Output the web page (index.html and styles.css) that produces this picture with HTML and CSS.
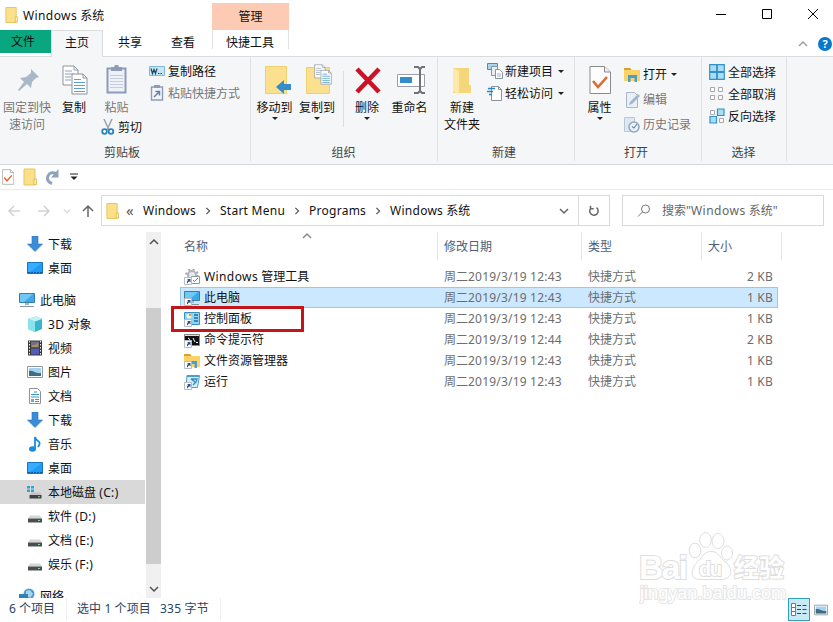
FILE: index.html
```html
<!DOCTYPE html>
<html lang="zh-CN">
<head>
    <meta charset="UTF-8">
    <meta name="viewport" content="width=device-width, initial-scale=1.0">
    <title>Windows 系统</title>
    <link rel="stylesheet" href="styles.css">
</head>
<body>
    <!-- 图标 -->
    <svg class="sprite">
        <symbol id="i-folder" viewBox="0 0 16 18">
            <path d="M2 1h11v16H2z" fill="#fbe08a" stroke="#e5c45c"/>
            <path d="M12 11h2.500v5.500H12z" fill="#ffeeb0" stroke="#d9b64d" stroke-width=".8"/>
        </symbol>
        <symbol id="i-check" viewBox="0 0 22 28">
            <path d="M1 .5h14.500l6 5.500v21.500H1z" fill="#fdfdfd" stroke="#8b8b8b"/>
            <path d="M15.500 .5V6h6" fill="#eee" stroke="#8b8b8b"/>
            <path d="M4 15l5 6 9-10" fill="none" stroke="#dd6b33" stroke-width="2.600"/>
        </symbol>
        <symbol id="i-pages" viewBox="0 0 26 30">
            <path d="M1 1h11l4 4v15H1z" fill="#fff" stroke="#8d939c"/>
            <path d="M12 1v4h4M3 6h7M3 9h9M3 12h6M3 15h6" fill="none" stroke="#8ca0bb"/>
            <path d="M10 9h11l4 4v16H10z" fill="#fff" stroke="#8d939c"/>
            <path d="M21 9v4h4" fill="none" stroke="#8d939c"/>
            <path d="M12 14.500h7M12 17.500h11M12 20.500h11M12 23.500h11M12 26.500h11" stroke="#5b9fd4" stroke-width="1.200"/>
        </symbol>
        <symbol id="i-download" viewBox="0 0 16 16">
            <path d="M5 0h6v8h4.500L8 15.500.5 8H5z" fill="#3a8bd8" stroke="#2c75bd" stroke-width=".6"/>
        </symbol>
        <symbol id="i-desktop" viewBox="0 0 16 16">
            <path d="M.5 2.500h15v11H.5z" fill="#1e9cf5" stroke="#1775bd"/>
            <path d="M1 3h14L3 12H1z" fill="#38acff"/>
            <path d="M1 12.500h14" stroke="#0c5d9e" stroke-dasharray="2 1"/>
        </symbol>
        <symbol id="i-pc" viewBox="0 0 16 16">
            <path d="M.5 1.500h15v9H.5z" fill="#3aaae8" stroke="#3c7da8"/>
            <path d="M1 2h13L5 10H1z" fill="#6fc8f5"/>
            <path d="M6 11h4v2H6z" fill="#aab7c2"/>
            <path d="M1 14.500h14" stroke="#7e93a5"/>
        </symbol>
        <symbol id="i-drive" viewBox="0 0 16 16">
            <path d="M3 7.500h10l2 3H1z" fill="#d6d6d6"/>
            <path d="M1 10.500h14v4H1z" fill="#4a4e52"/>
            <path d="M11 12.500h2" stroke="#79e07f" stroke-width="1.200"/>
        </symbol>
        <symbol id="i-picture" viewBox="0 0 16 16">
            <path d="M.5 2.500h15v11H.5z" fill="#fff" stroke="#8f989f"/>
            <path d="M2 4h12v8H2z" fill="#a7d3ee"/>
            <path d="M2 7c4-1 7 3 12 2v3H2z" fill="#3e6c83"/>
        </symbol>
        <symbol id="i-shortcut" viewBox="0 0 16 16">
            <path d="M.5 8.500h7v7h-7z" fill="#fff" stroke="#b8bcc0"/>
            <path d="M3 10h3.500v3.500L5.300 12.300Q3.800 13 3.600 14.500q-1.800-1.500.6-3.400z" fill="#28518d"/>
        </symbol>
        <symbol id="i-gear" viewBox="0 0 16 16">
            <circle cx="8" cy="6" r="4" fill="#e8eaec" stroke="#b0b5b9" stroke-width="2"/>
            <circle cx="8" cy="6" r="5.800" fill="none" stroke="#a4a9ae" stroke-width="2" stroke-dasharray="2 2.550"/>
            <path d="M7.500 7.500h8v7h-8z" fill="#fff" stroke="#8d99a4"/>
            <path d="M9 11l1.500 1.500L14 9" fill="none" stroke="#3c83b8"/>
        </symbol>
        <symbol id="i-panel" viewBox="0 0 16 16">
            <path d="M.5 1.500h15v12H.5z" fill="#8fd3f3" stroke="#3b8fc4"/>
            <circle cx="5" cy="5" r="2.500" fill="#f4f8dc"/>
            <path d="M5 5V2.500A2.500 2.500 0 0 1 7.500 5z" fill="#e39840"/>
            <path d="M10 4h4M10 7h4M10 10h4" stroke="#246d9f" stroke-width="1.500"/>
        </symbol>
        <symbol id="i-cmd" viewBox="0 0 16 16">
            <path d="M.5 2.500h15v11H.5z" fill="#111" stroke="#888"/>
            <path d="M1 3.500h14" stroke="#ddd"/>
            <path d="M4 6l2 1.500L4 9M9 6l2 4M12 10.500h2" fill="none" stroke="#fff"/>
        </symbol>
        <symbol id="i-explorer" viewBox="0 0 16 16">
            <path d="M0 1h6l1.500 2H16v11H0z" fill="#f9d367"/>
            <path d="M0 1h6l1.500 2H0z" fill="#dba02c"/>
            <path d="M4 15V8h9v7h-2.500v-4h-4v4z" fill="#4a9fce"/>
        </symbol>
        <symbol id="i-run" viewBox="0 0 16 16">
            <path d="M3 1.500h12.500l-2 12H2z" fill="#d6eef9" stroke="#4e9cc7"/>
            <path d="M3 2.500h12" stroke="#4e9cc7"/>
            <path d="M7 5h6l-1 3-3 3M7 5l4 3" fill="none" stroke="#2f86bd" stroke-width="1.300"/>
        </symbol>
        <symbol id="i-chevron" viewBox="0 0 10 10">
            <path d="M1 3l4 4 4-4" fill="none" stroke="currentColor" stroke-width="1.500"/>
        </symbol>
        <symbol id="i-arrow" viewBox="0 0 14 14">
            <path d="M13 7H2M7 2L2 7l5 5" fill="none" stroke="currentColor" stroke-width="1.500"/>
        </symbol>
    </svg>

    <!-- 标题栏 -->
    <header class="titlebar">
        <div class="title">
            <svg class="title-icon"><use href="#i-folder"/></svg>
            <span><span class="en">Windows</span> 系统</span>
        </div>
        <div class="context-tab">管理</div>
        <div class="window-buttons">
            <svg viewBox="0 0 46 28"><path d="M18 14.500h10"/></svg>
            <svg viewBox="0 0 46 28"><path d="M18.500 9.500h9v9h-9z"/></svg>
            <svg viewBox="0 0 46 28"><path d="M18 9l10 10M28 9L18 19"/></svg>
        </div>
    </header>

    <!-- 选项卡 -->
    <nav class="tabs">
        <a class="tab tab-file">文件</a>
        <a class="tab tab-active">主页</a>
        <a class="tab tab-share">共享</a>
        <a class="tab tab-view">查看</a>
        <a class="tab tab-tools">快捷工具</a>
        <div class="tabs-right">
            <svg class="collapse"><use href="#i-chevron"/></svg>
            <span class="help">?</span>
        </div>
    </nav>

    <!-- 功能区 -->
    <section class="ribbon">
        <div class="group group-clipboard">
            <div class="group-body">
                <div class="big disabled w-pin">
                    <svg class="big-icon" viewBox="0 0 32 32">
                        <path d="M20 5l8 8-3 1-4 4-1 6-4-4-8 7-1-1 6-8-4-4 6-1 5-4z" fill="#a9b8c9"/>
                    </svg>
                    <span>固定到快<br>速访问</span>
                </div>
                <div class="big w-copy">
                    <svg class="big-icon" viewBox="0 0 32 32"><use href="#i-pages" x="4" y="1" width="26" height="30"/></svg>
                    <span>复制</span>
                </div>
                <div class="paste-column">
                    <div class="big disabled">
                        <svg class="big-icon" viewBox="0 0 32 32">
                            <path d="M6.500 4.500h18v24h-18z" fill="#eef2f8" stroke="#8b9cb8" stroke-width="2"/>
                            <path d="M10 3h3l1-2h3l1 2h3v4H10z" fill="#8e9db5"/>
                            <path d="M9 11.500h13M9 14.500h13M9 17.500h13M9 20.500h13M9 23.500h13" stroke="#c3cddc"/>
                        </svg>
                        <span>粘贴</span>
                    </div>
                    <div class="small cut">
                        <svg class="small-icon" viewBox="0 0 16 16">
                            <path d="M3 0l5 11M11 0L6 11" stroke="#9aa4ae" stroke-width="1.500"/>
                            <circle cx="3.500" cy="12.500" r="2.300" fill="#fff" stroke="#2685bd" stroke-width="1.800"/>
                            <circle cx="10" cy="12.500" r="2.300" fill="#fff" stroke="#2685bd" stroke-width="1.800"/>
                        </svg>
                        <span>剪切</span>
                    </div>
                </div>
                <div class="small-list">
                    <div class="small">
                        <svg class="small-icon" viewBox="0 0 16 16">
                            <path d="M.5 3.500h15v9H.5z" fill="#c5e5f7" stroke="#82b9d8"/>
                            <path d="M2 5.500l1.500 5L5 6.500l1.500 4 1.500-5M9 10.500h1.500M11.500 10.500H13" fill="none" stroke="#1d4763" stroke-width="1.200"/>
                        </svg>
                        <span>复制路径</span>
                    </div>
                    <div class="small disabled">
                        <svg class="small-icon" viewBox="0 0 16 16">
                            <path d="M2.500 2h11v13h-11z" fill="#f2f5f9" stroke="#8d9db7" stroke-width="1.400"/>
                            <path d="M5 0h6v3H5z" fill="#8d9db7"/>
                            <path d="M5 12l5-5M6.500 6.500h4v4" fill="none" stroke="#6681a8" stroke-width="1.500"/>
                        </svg>
                        <span>粘贴快捷方式</span>
                    </div>
                </div>
            </div>
            <div class="group-label">剪贴板</div>
        </div>

        <div class="group group-organize">
            <div class="group-body">
                <div class="big w-move">
                    <svg class="big-icon" viewBox="0 0 32 32">
                        <path d="M6.500 2.500h21v27h-21z" fill="#fbe08f" stroke="#edcf70"/>
                        <path d="M17 23l8-7v4h7v6h-7v4z" fill="#338ccb"/>
                    </svg>
                    <span>移动到</span>
                    <i class="caret"></i>
                </div>
                <div class="big w-copyto">
                    <svg class="big-icon" viewBox="0 0 32 32">
                        <path d="M5.500 3.500h23v26h-23z" fill="#fbe08f" stroke="#edcf70"/>
                        <use href="#i-pages" x="13" y="0" width="18" height="21"/>
                    </svg>
                    <span>复制到</span>
                    <i class="caret"></i>
                </div>
                <div class="divider"></div>
                <div class="big w-delete">
                    <svg class="big-icon" viewBox="0 0 32 32">
                        <path d="M6 5l22 23M28 5L6 28" stroke="#cd1126" stroke-width="4.600"/>
                    </svg>
                    <span>删除</span>
                    <i class="caret"></i>
                </div>
                <div class="big w-rename">
                    <svg class="big-icon" viewBox="0 0 32 32">
                        <path d="M3.500 10.500h27v12h-27z" fill="#fff" stroke="#9aa1a8"/>
                        <path d="M6 13h12v6H6z" fill="#348ccd"/>
                        <path d="M20 3h4l2 2 2-2h3M26 5v22M20 29h4l2-2 2 2h3" fill="none" stroke="#6e7276" stroke-width="2"/>
                    </svg>
                    <span>重命名</span>
                </div>
            </div>
            <div class="group-label">组织</div>
        </div>

        <div class="group group-new">
            <div class="group-body">
                <div class="big w-new">
                    <svg class="big-icon" viewBox="0 0 32 32">
                        <path d="M7 4h16v16l2 2v7H7z" fill="#f6d67b"/>
                        <path d="M7 4l6 3v24l-6-4z" fill="#ffe9a8"/>
                    </svg>
                    <span>新建<br>文件夹</span>
                </div>
                <div class="small-list">
                    <div class="small">
                        <svg class="small-icon" viewBox="0 0 16 16">
                            <path d="M.5 .5h10v6H.5z" fill="#a9d6ef" stroke="#5489a8"/>
                            <path d="M4.500 3.500h6v9h-6z" fill="#e8eef2" stroke="#88939c"/>
                            <path d="M8.500 6.500h4l3 3v6h-7z" fill="#fff" stroke="#88939c"/>
                            <path d="M10 11h4M10 13h4" stroke="#9cb0c0"/>
                        </svg>
                        <span>新建项目</span>
                        <i class="caret"></i>
                    </div>
                    <div class="small">
                        <svg class="small-icon" viewBox="0 0 16 16">
                            <path d="M4.500 1.500h7l3 3v11h-10z" fill="#fff" stroke="#88939c"/>
                            <path d="M11.500 1.500v3h3" fill="none" stroke="#88939c"/>
                            <path d="M1 3.500h7M0 6.500h6M2 9.500h3" stroke="#2e84bd" stroke-width="1.300"/>
                        </svg>
                        <span>轻松访问</span>
                        <i class="caret"></i>
                    </div>
                </div>
            </div>
            <div class="group-label">新建</div>
        </div>

        <div class="group group-open">
            <div class="group-body">
                <div class="big w-props">
                    <svg class="big-icon" viewBox="0 0 32 32"><use href="#i-check" x="5" y="2" width="22" height="28"/></svg>
                    <span>属性</span>
                    <i class="caret"></i>
                </div>
                <div class="small-list">
                    <div class="small">
                        <svg class="small-icon"><use href="#i-explorer"/></svg>
                        <span>打开</span>
                        <i class="caret"></i>
                    </div>
                    <div class="small disabled">
                        <svg class="small-icon" viewBox="0 0 16 16">
                            <path d="M2.500 .5h8l3 3v12h-11z" fill="#e9eff6" stroke="#a9b7c7"/>
                            <path d="M5 13l1-3 8-8 2 2-8 8z" fill="#a3b6cb"/>
                        </svg>
                        <span>编辑</span>
                    </div>
                    <div class="small disabled">
                        <svg class="small-icon" viewBox="0 0 16 16">
                            <path d="M.5 .5h10v14H.5z" fill="#dfe7f1" stroke="#b9c6d6"/>
                            <circle cx="10" cy="10" r="5" fill="#edf2f8" stroke="#94a8c2" stroke-width="1.600"/>
                            <path d="M13 7l-3 4-2-1.500" fill="none" stroke="#6f87a8" stroke-width="1.200"/>
                        </svg>
                        <span>历史记录</span>
                    </div>
                </div>
            </div>
            <div class="group-label">打开</div>
        </div>

        <div class="group group-select">
            <div class="group-body">
                <div class="small-list">
                    <div class="small">
                        <svg class="small-icon" viewBox="0 0 16 16">
                            <path d="M.7 .7h7v7h-7zM8.300 .7h7v7h-7zM.7 8.300h7v7h-7zM8.300 8.300h7v7h-7z" fill="#a9dcf5" stroke="#3490c8" stroke-width="1.200"/>
                        </svg>
                        <span>全部选择</span>
                    </div>
                    <div class="small">
                        <svg class="small-icon" viewBox="0 0 16 16">
                            <path d="M1.500 1.500h4v4h-4zM9.500 1.500h4v4h-4zM1.500 9.500h4v4h-4zM9.500 9.500h4v4h-4z" fill="#fff" stroke="#a8a8a8"/>
                        </svg>
                        <span>全部取消</span>
                    </div>
                    <div class="small">
                        <svg class="small-icon" viewBox="0 0 16 16">
                            <path d="M1.500 2.500h4v4h-4zM10.500 10.500h4v4h-4z" fill="#fff" stroke="#a8a8a8"/>
                            <path d="M8.500 1h6.500v6.500H8.500zM1 8.500h6.500V15H1z" fill="#a9dcf5" stroke="#3490c8" stroke-width="1.200"/>
                        </svg>
                        <span>反向选择</span>
                    </div>
                </div>
            </div>
            <div class="group-label">选择</div>
        </div>
    </section>

    <!-- 快速访问工具栏 -->
    <div class="quickbar">
        <svg class="quick-check"><use href="#i-check"/></svg>
        <svg class="quick-folder"><use href="#i-folder"/></svg>
        <svg class="quick-redo" viewBox="0 0 16 16">
            <path d="M7 14.500Q1 12 3 7t8-2.500" fill="none" stroke="#8fa3bb" stroke-width="3"/>
            <path d="M13.500 0v8.500H6z" fill="#8fa3bb"/>
        </svg>
        <svg class="quick-more" viewBox="0 0 8 8"><path d="M0 1h8" stroke="#222"/><path d="M.5 3.500h7L4 7z" fill="#222"/></svg>
    </div>

    <!-- 地址栏 -->
    <div class="address-row">
        <div class="history">
            <svg class="back"><use href="#i-arrow"/></svg>
            <svg class="forward"><use href="#i-arrow"/></svg>
            <svg class="recent"><use href="#i-chevron"/></svg>
            <svg class="up"><use href="#i-arrow"/></svg>
        </div>
        <div class="address">
            <svg class="address-icon"><use href="#i-folder"/></svg>
            <span class="more">«</span>
            <span class="crumb en">Windows</span>
            <svg class="crumb-arrow"><use href="#i-chevron"/></svg>
            <span class="crumb en">Start Menu</span>
            <svg class="crumb-arrow"><use href="#i-chevron"/></svg>
            <span class="crumb en">Programs</span>
            <svg class="crumb-arrow"><use href="#i-chevron"/></svg>
            <span class="crumb"><span class="en">Windows</span> 系统</span>
            <svg class="address-drop"><use href="#i-chevron"/></svg>
            <div class="refresh">
                <svg viewBox="0 0 12 12">
                    <path d="M3 3a4.200 4.200 0 1 0 5.500-.3M2.500 .8v3h3.200" fill="none" stroke="#666" stroke-width="1.500"/>
                </svg>
            </div>
        </div>
        <div class="search">
            <svg viewBox="0 0 14 14"><circle cx="8.500" cy="5" r="4" fill="none" stroke="#777"/><path d="M5.500 8L1 12.500" stroke="#777"/></svg>
            <span>搜索"<span class="en">Windows</span> 系统"</span>
        </div>
    </div>

    <main class="content">
        <!-- 导航窗格 -->
        <aside class="tree">
            <div class="node child"><svg><use href="#i-download"/></svg><span>下载</span></div>
            <div class="node child"><svg><use href="#i-desktop"/></svg><span>桌面</span></div>
            <div class="node root"><svg><use href="#i-pc"/></svg><span>此电脑</span></div>
            <div class="node child">
                <svg viewBox="0 0 16 16">
                    <path d="M1 3l8-2.500L15 3v10l-7 3-7-3z" fill="#39b6cc"/>
                    <path d="M1 3l7 2.500V16l-7-3z" fill="#8ae2ec"/>
                    <path d="M1 3l8-2.500L15 3 8 5.500z" fill="#c0f3f7"/>
                </svg>
                <span><span class="drive">3D</span> 对象</span>
            </div>
            <div class="node child">
                <svg viewBox="0 0 16 16">
                    <path d="M1 .5h14v15H1z" fill="#393939"/>
                    <path d="M4 1.500h8v6H4z" fill="#716c8d"/>
                    <path d="M4 8.500h8v6H4z" fill="#515db8"/>
                    <path d="M5 5h3l3-2v4H5z" fill="#a89548"/>
                    <path d="M2.500 1v14M13.500 1v14" stroke="#eee" stroke-dasharray="1.500 1.500"/>
                </svg>
                <span>视频</span>
            </div>
            <div class="node child"><svg><use href="#i-picture"/></svg><span>图片</span></div>
            <div class="node child">
                <svg viewBox="0 0 16 16">
                    <path d="M2.500 .5h8l3 3v12h-11z" fill="#fff" stroke="#8d9499"/>
                    <path d="M7 4h3M4 6.500h8M4 9h8M8 11.500h4M8 13.500h4" stroke="#3f92c3"/>
                    <path d="M4 11h3v3H4z" fill="#67abd0"/>
                </svg>
                <span>文档</span>
            </div>
            <div class="node child"><svg><use href="#i-download"/></svg><span>下载</span></div>
            <div class="node child">
                <svg viewBox="0 0 16 16">
                    <ellipse cx="5.500" cy="13" rx="3.500" ry="2.700" fill="#1c8bdc"/>
                    <path d="M8 13V1q1 3 3.500 4.500T11 11" fill="none" stroke="#1c8bdc" stroke-width="1.800"/>
                </svg>
                <span>音乐</span>
            </div>
            <div class="node child"><svg><use href="#i-desktop"/></svg><span>桌面</span></div>
            <div class="node child selected">
                <svg viewBox="0 0 16 16">
                    <path d="M0 2h3v2.500H0zM4 2h3v2.500H4zM0 5.500h3V8H0zM4 5.500h3V8H4z" fill="#24a9dd"/>
                    <path d="M4 8.500h9l1.500 2.500h-12z" fill="#c4c4c4"/>
                    <path d="M2.500 11h12v3.500h-12z" fill="#3f4347"/>
                    <path d="M11 12.700h2" stroke="#79e07f"/>
                </svg>
                <span>本地磁盘 <span class="drive">(C:)</span></span>
            </div>
            <div class="node child"><svg><use href="#i-drive"/></svg><span>软件 <span class="drive">(D:)</span></span></div>
            <div class="node child"><svg><use href="#i-drive"/></svg><span>文档 <span class="drive">(E:)</span></span></div>
            <div class="node child"><svg><use href="#i-drive"/></svg><span>娱乐 <span class="drive">(F:)</span></span></div>
            <div class="node root network">
                <svg viewBox="0 0 16 16">
                    <circle cx="10" cy="6" r="5.500" fill="#4e9bd0"/>
                    <path d="M7 3l4-1 3 4-3 4-4-3z" fill="#a6d5ee"/>
                    <path d="M0 6h9v6H0z" fill="#3182ba"/>
                </svg>
                <span>网络</span>
            </div>
        </aside>
        <div class="scrollbar">
            <svg class="scroll-up"><use href="#i-chevron"/></svg>
            <div class="thumb"></div>
            <svg class="scroll-down"><use href="#i-chevron"/></svg>
        </div>

        <!-- 文件列表 -->
        <section class="files">
            <svg class="sort"><use href="#i-chevron"/></svg>
            <div class="row head">
                <span>名称</span><span>修改日期</span><span>类型</span><span>大小</span>
            </div>
            <div class="row">
                <span class="name"><svg><use href="#i-gear"/><use href="#i-shortcut"/></svg><span><span class="en">Windows</span> 管理工具</span></span>
                <span>周二<span class="num">2019/3/19 12:43</span></span><span>快捷方式</span><span class="size">2 KB</span>
            </div>
            <div class="row active">
                <span class="name"><svg><use href="#i-pc"/><use href="#i-shortcut"/></svg>此电脑</span>
                <span>周二<span class="num">2019/3/19 12:43</span></span><span>快捷方式</span><span class="size">1 KB</span>
            </div>
            <div class="row">
                <span class="name"><svg><use href="#i-panel"/><use href="#i-shortcut"/></svg>控制面板</span>
                <span>周二<span class="num">2019/3/19 12:43</span></span><span>快捷方式</span><span class="size">1 KB</span>
            </div>
            <div class="row">
                <span class="name"><svg><use href="#i-cmd"/><use href="#i-shortcut"/></svg>命令提示符</span>
                <span>周二<span class="num">2019/3/19 12:44</span></span><span>快捷方式</span><span class="size">2 KB</span>
            </div>
            <div class="row">
                <span class="name"><svg><use href="#i-explorer"/><use href="#i-shortcut"/></svg>文件资源管理器</span>
                <span>周二<span class="num">2019/3/19 12:43</span></span><span>快捷方式</span><span class="size">1 KB</span>
            </div>
            <div class="row">
                <span class="name"><svg><use href="#i-run"/><use href="#i-shortcut"/></svg>运行</span>
                <span>周二<span class="num">2019/3/19 12:43</span></span><span>快捷方式</span><span class="size">1 KB</span>
            </div>
            <div class="marker"></div>
        </section>
    </main>

    <!-- 状态栏 -->
    <footer class="status">
        <span class="count">6 个项目</span>
        <span class="picked">选中 1 个项目</span>
        <span class="bytes">335 字节</span>
        <div class="views">
            <span class="view view-on">
                <svg viewBox="0 0 16 14"><path d="M.5 .5h4v4h-4zM.5 4.500h4v4h-4zM.5 8.500h4v4h-4z" fill="#fff" stroke="#777"/><path d="M6 2.500h4M11.500 2.500h4M6 6.500h4M11.500 6.500h4M6 10.500h4M11.500 10.500h4" stroke="#444"/></svg>
            </span>
            <span class="view"><svg><use href="#i-picture"/></svg></span>
        </div>
    </footer>

    <!-- 水印 -->
    <svg class="watermark" viewBox="0 0 150 74">
        <g class="paw">
            <ellipse cx="56" cy="20.500" rx="5.800" ry="7.300"/>
            <ellipse cx="66.500" cy="10" rx="5.800" ry="7.500"/>
            <ellipse cx="79" cy="11" rx="6" ry="7.500"/>
            <ellipse cx="88" cy="23" rx="5.500" ry="7"/>
            <path d="M72 21.500c-8 0-9 7-14 11s-9 17 3 17h21c12 0 12-12 5-17s-7-11-15-11z"/>
        </g>
        <text class="wm-big" x="0" y="49" textLength="49">Bai</text>
        <text class="wm-du" x="60" y="46" textLength="23">du</text>
        <text class="wm-cn" x="95" y="47" textLength="50">经验</text>
        <text class="wm-url" x="1" y="69" textLength="146">jingyan.baidu.com</text>
    </svg>
</body>
</html>
```
FILE: styles.css
```css
* {
    box-sizing: border-box;
}

body {
    position: relative;
    display: flex;
    flex-direction: column;
    width: 833px;
    height: 622px;
    margin: 0;
    overflow: hidden;
    background: #fff;
    color: #111;
    font-family: "Noto Sans", "Noto Sans CJK SC", sans-serif;
    font-size: 12px;
    line-height: 17px;
    white-space: nowrap;
}

svg {
    display: block;
    flex: none;
}

.sprite {
    position: absolute;
    width: 0;
    height: 0;
}

.en {
    letter-spacing: 0.25px;
}

.num {
    letter-spacing: 0.2px;
}

/* 标题栏 */
.titlebar {
    display: flex;
    flex: none;
    height: 30px;
}

.title {
    display: flex;
    align-items: center;
    width: 212px;
    padding-left: 4px;
    gap: 4px;
}

.title .en {
    letter-spacing: 0.4px;
}

.title-icon {
    width: 15px;
    height: 18px;
}

.context-tab {
    width: 77px;
    height: 27px;
    margin-top: 3px;
    background: #fdcbb3;
    line-height: 27px;
    text-align: center;
}

.window-buttons {
    display: flex;
    margin: 0 -3px 0 auto;
}

.window-buttons svg {
    width: 46px;
    height: 28px;
    fill: none;
    stroke: #000;
}

/* 选项卡 */
.tabs {
    position: relative;
    display: flex;
    flex: none;
    height: 27px;
    margin-bottom: -1px;
}

.tab {
    height: 26px;
    line-height: 25px;
    text-align: center;
}

.tab-file {
    width: 51px;
    height: 23px;
    padding-right: 5px;
    background: #09a77f;
    line-height: 23px;
}

.tab-active {
    width: 52px;
    height: 27px;
    border: 1px solid #dadbdc;
    border-bottom: 0;
    background: #f5f6f7;
    line-height: 24px;
}

.tab-share {
    width: 54px;
}

.tab-view {
    width: 52px;
    margin-right: 3px;
}

.tab-tools {
    width: 77px;
    height: 19px;
    padding-right: 1px;
    border: 1px solid #e6e2e0;
    border-width: 0 1px;
}

.tabs-right {
    display: flex;
    align-items: center;
    gap: 10px;
    margin-left: auto;
    padding-right: 1px;
}

.collapse {
    width: 10px;
    height: 10px;
    color: #a0a0a0;
    transform: rotate(180deg);
}

.help {
    width: 14px;
    height: 14px;
    border-radius: 50%;
    background: #0877cc;
    color: #fff;
    font-weight: bold;
    font-size: 11px;
    line-height: 14px;
    text-align: center;
}

/* 功能区 */
.ribbon {
    display: flex;
    flex: none;
    height: 109px;
    border-top: 1px solid #dadbdc;
    border-bottom: 1px solid #d5d6d7;
    background: #f5f6f7;
}

.group {
    display: flex;
    flex-direction: column;
    height: 104px;
    border-right: 1px solid #e0e1e2;
}

.group-clipboard { width: 251px; }
.group-organize { width: 187px; }
.group-new { width: 137px; }
.group-open { width: 127px; }
.group-select { width: 85px; }

.group-body {
    display: flex;
    height: 87px;
    padding-top: 7px;
}

.group-label {
    padding-right: 4px;
    color: #444;
    text-align: center;
}

.group-clipboard .group-label {
    padding-right: 6px;
}

.group-organize .group-label,
.group-select .group-label {
    padding-right: 1px;
}

.big {
    display: flex;
    flex-direction: column;
    align-items: center;
    text-align: center;
}

.big-icon {
    width: 32px;
    height: 32px;
    margin-bottom: 3px;
}

.w-pin { width: 54px; }
.w-copy { width: 40px; }
.w-move { width: 47px; }
.w-copyto { width: 38px; }
.w-delete { width: 46px; }
.w-rename { width: 39px; }
.w-new { width: 48px; }
.w-props { width: 49px; }

.caret {
    width: 0;
    height: 0;
    border: 3px solid transparent;
    border-top: 3px solid #222;
    border-bottom: 0;
}

.big .caret {
    margin-top: 1px;
}

.disabled {
    color: #777;
}

.paste-column {
    width: 55px;
}

.paste-column .big {
    width: 45px;
}

.small {
    display: flex;
    align-items: center;
    height: 22px;
    gap: 3px;
}

/* мелкие строки стоят чуть выше больших кнопок */
.small-list {
    margin-top: -3px;
}

.group-open .small-list {
    margin-top: -2px;
}

.small-icon {
    width: 16px;
    height: 16px;
}

.small .caret {
    margin-left: 3px;
}

.cut {
    margin-left: 7px;
    gap: 1px;
}

.group-clipboard .small-list,
.group-new .small-list {
    margin-top: -4px;
}

.group-new .small-list {
    padding-left: 1px;
}

.group-new .small {
    gap: 2px;
}

.group-open .small {
    height: 25px;
}

.group-open .small .caret {
    margin-left: 1px;
}

.group-select .small-list {
    padding-left: 7px;
}

.divider {
    width: 1px;
    height: 56px;
    margin: 7px 0 0 7px;
    background: #dddee0;
}

/* 快速访问工具栏 */
.quickbar {
    display: flex;
    flex: none;
    align-items: center;
    height: 25px;
    padding-left: 2px;
    border-bottom: 1px solid #ececec;
}

.quick-check {
    width: 12px;
    height: 16px;
    margin-right: 8px;
}

.quick-folder {
    width: 16px;
    height: 18px;
    margin-right: 7px;
}

.quick-redo {
    width: 16px;
    height: 16px;
    margin-right: 9px;
}

.quick-more {
    width: 8px;
    height: 8px;
}

/* 地址栏 */
.address-row {
    display: flex;
    flex: none;
    height: 42px;
    padding-top: 5px;
}

.history {
    display: flex;
    align-items: center;
    width: 101px;
    height: 31px;
    padding-left: 7px;
    color: #d2d2d2;
}

.history svg {
    width: 14px;
    height: 14px;
}

.history .forward {
    margin-left: 16px;
    transform: rotate(180deg);
}

.history .recent {
    width: 8px;
    height: 8px;
    margin: 0 10px 0 12px;
}

.history .up {
    color: #666;
    transform: rotate(90deg);
}

.address {
    display: flex;
    align-items: center;
    width: 509px;
    height: 31px;
    border: 1px solid #d9d9d9;
}

.address-icon {
    width: 15px;
    height: 18px;
    margin-left: 3px;
}

.more {
    width: 17px;
    margin-left: 6px;
    color: #555;
    font-size: 15px;
}

.crumb {
    line-height: 16px;
}

.crumb-arrow {
    width: 8px;
    height: 8px;
    margin: 0 8px;
    color: #555;
    transform: rotate(-90deg);
}

.address-drop {
    width: 10px;
    height: 10px;
    margin-left: auto;
    margin-right: 9px;
    color: #666;
}

.refresh {
    display: flex;
    align-items: center;
    justify-content: center;
    width: 31px;
    height: 29px;
    border-left: 1px solid #d9d9d9;
}

.refresh svg {
    width: 12px;
    height: 12px;
}

.search {
    display: flex;
    align-items: center;
    width: 202px;
    height: 31px;
    margin-left: 12px;
    padding-left: 14px;
    border: 1px solid #d9d9d9;
    color: #666;
    gap: 11px;
}

.search .en {
    letter-spacing: 0.5px;
}

.search svg {
    width: 14px;
    height: 14px;
}

/* 导航窗格 */
.content {
    display: flex;
    flex: none;
    height: 366px;
    overflow: hidden;
}

.tree {
    width: 145px;
}

.node {
    display: flex;
    align-items: center;
    height: 24px;
    gap: 5px;
}

.node svg {
    width: 16px;
    height: 16px;
}

.child {
    padding-left: 27px;
}

.root {
    margin-top: 8px;
    padding-left: 19px;
}

.drive {
    letter-spacing: 0.4px;
}

.selected {
    background: #d9d9d9;
}

.scrollbar {
    display: flex;
    flex-direction: column;
    align-items: center;
    width: 15px;
    margin-left: 1px;
    background: #f0f0f0;
    color: #505050;
}

.scrollbar svg {
    width: 10px;
    height: 10px;
}

.scroll-up {
    margin: 5px 0 61px;
    transform: rotate(180deg);
}

.thumb {
    width: 15px;
    height: 256px;
    background: #cdcdcd;
}

.scroll-down {
    margin-top: 20px;
}

/* 文件列表 */
.files {
    position: relative;
    width: 672px;
    padding-left: 19px;
}

.row {
    display: grid;
    grid-template-columns: 257px 144px 120px 77px;
    align-items: center;
    width: 598px;
    height: 21px;
    color: #6d6d6d;
}

.row > span {
    padding-left: 7px;
}

.row .name {
    display: flex;
    align-items: center;
    padding-left: 4px;
    color: #111;
    gap: 4px;
}

.name .en {
    letter-spacing: 0.4px;
}

.name svg {
    width: 16px;
    height: 16px;
}

.row .size {
    padding-right: 5px;
    text-align: right;
    letter-spacing: 0.2px;
}

.head {
    grid-template-columns: 258px 144px 120px 80px;
    width: 602px;
    height: 28px;
    margin-bottom: 6px;
    color: #4c607a;
}

.head > span {
    height: 28px;
    padding-left: 6px;
    border-right: 1px solid #e5e5e5;
    line-height: 29px;
}

.head > span:first-child {
    padding-left: 4px;
}

.active {
    background: #cce8ff;
    box-shadow: inset 0 0 0 1px #99c9e8;
}

.sort {
    position: absolute;
    top: -1px;
    left: 141px;
    width: 10px;
    height: 10px;
    color: #888;
    transform: rotate(180deg);
}

.marker {
    position: absolute;
    top: 74px;
    left: 10px;
    width: 133px;
    height: 26px;
    border: 3px solid #c41519;
}

/* 状态栏 */
.status {
    display: flex;
    flex: none;
    align-items: flex-start;
    height: 24px;
    padding-left: 9px;
    color: #2b4560;
    line-height: 22px;
}

.count {
    width: 58px;
    border-right: 1px solid #eee;
}

.picked {
    width: 93px;
    padding-left: 10px;
    letter-spacing: 0.1px;
}

.bytes {
    width: 61px;
    border-right: 1px solid #eee;
    letter-spacing: 0.2px;
}

.views {
    display: flex;
    margin: 0 1px 0 auto;
}

.view {
    display: flex;
    align-items: center;
    justify-content: center;
    width: 22px;
    height: 23px;
}

.view svg {
    width: 14px;
    height: 14px;
}

.view-on {
    border: 1px solid #2e9fbd;
    background: #c9eaf5;
}

.view-on svg {
    width: 16px;
}

/* 水印 */
.watermark {
    position: absolute;
    top: 530px;
    left: 639px;
    width: 150px;
    height: 74px;
    fill: #fff;
    stroke: #dedede;
    stroke-width: 1px;
    font-family: "Liberation Sans", "Noto Sans CJK SC", sans-serif;
}

.watermark text {
    paint-order: stroke;
    stroke-width: 2px;
}

.wm-big {
    font-size: 34px;
    font-weight: bold;
}

.wm-du {
    font-size: 20px;
    font-weight: bold;
}

.wm-cn {
    font-size: 25px;
    font-weight: bold;
}

.wm-url {
    font-size: 18px;
    stroke: #e6e6e6;
}
```
